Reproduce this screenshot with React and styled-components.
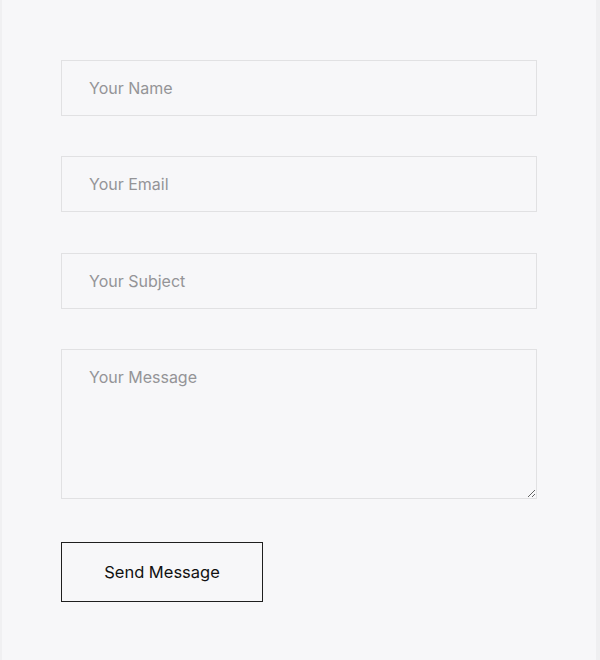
import React, { useState } from 'react';
import styled, { createGlobalStyle } from 'styled-components';

const GlobalStyle = createGlobalStyle`
  html, body {
    margin: 0;
    padding: 0;
    background: #f7f7f9;
  }
  body {
    font-family: Inter, "Noto Sans", sans-serif;
  }
`;

const Panel = styled.div`
  box-sizing: border-box;
  width: 600px;
  min-height: 660px;
  padding: 60px 63px 58px 61px;
  background: #f7f7f9;
  border-left: 2px solid #f0f0f2;
  border-right: 4px solid #efeff1;
`;

const Form = styled.form`
  display: flex;
  flex-direction: column;
  gap: 40.4px;
  margin-left: -2px;
`;

const fieldBase = `
  box-sizing: border-box;
  width: 476px;
  border: 1px solid #e1e1e3;
  background: #f7f7f9;
  padding: 0 27px;
  font-family: Inter, "Noto Sans", sans-serif;
  font-size: 16px;
  color: #333;
  outline: none;
  &::placeholder {
    color: #949497;
  }
`;

const Input = styled.input`
  ${fieldBase}
  height: 56px;
`;

const TextArea = styled.textarea`
  ${fieldBase}
  height: 149.5px;
  padding-top: 17px;
  resize: vertical;
  display: block;
`;

const SendButton = styled.button`
  box-sizing: border-box;
  width: 202px;
  height: 60px;
  margin-top: 3px;
  border: 1px solid #1f1f1f;
  background: transparent;
  font-family: Inter, "Noto Sans", sans-serif;
  font-size: 16.5px;
  color: #111;
  cursor: pointer;
`;

export default function App() {
  const [form, setForm] = useState({ name: '', email: '', subject: '', message: '' });
  const update = (key) => (e) => setForm({ ...form, [key]: e.target.value });

  return (
    <>
      <GlobalStyle />
      <Panel>
        <Form onSubmit={(e) => e.preventDefault()}>
          <Input placeholder="Your Name" value={form.name} onChange={update('name')} />
          <Input placeholder="Your Email" value={form.email} onChange={update('email')} />
          <Input placeholder="Your Subject" value={form.subject} onChange={update('subject')} />
          <TextArea placeholder="Your Message" value={form.message} onChange={update('message')} />
          <div>
            <SendButton type="submit">Send Message</SendButton>
          </div>
        </Form>
      </Panel>
    </>
  );
}
